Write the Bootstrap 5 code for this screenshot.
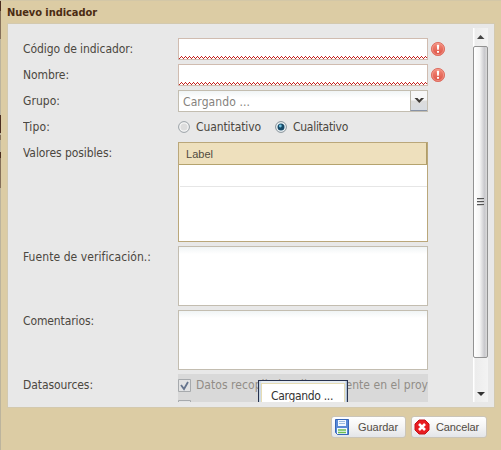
<!DOCTYPE html>
<html lang="es">
<head>
<meta charset="utf-8">
<title>Nuevo indicador</title>
<link href="https://cdn.jsdelivr.net/npm/bootstrap@5.3.0/dist/css/bootstrap.min.css" rel="stylesheet">
<style>
body{width:501px;height:450px;overflow:hidden;background:#dccca4;font:12px/16px "DejaVu Sans Condensed","DejaVu Sans",sans-serif;color:#4b4740;font-stretch:condensed}
.dialog{width:501px;height:450px;padding:0 7px;background:#dccca4;border-left:1px solid #bcb49d;padding-left:6px;border-top:1px solid #d3c7a7}
.edge{left:-1px;width:1px;background:#4b2d20}
.edge.soft{background:#85705a}
.dialog-title{height:22px;font-size:11px;line-height:23px;font-weight:bold;color:#4b2b12}
.pane{width:488px;height:385px;background:#e8e8e8;border:1px solid #d3c9ae;padding:4px 5px 5px 15px}
.form-view{width:434px;height:374px;padding-top:10px;overflow:hidden}
.field{margin-bottom:4px;min-height:22px}
.field-name{width:155px;flex:none;padding-top:3px}
.box{width:250px;height:22px;border:1px solid #c3bdb0;background:#fff linear-gradient(#f0f4f5,#fff 7px)}
.box.bad{border-color:#d0bcb0;background-color:#fff;background-image:linear-gradient(90deg,#c4201c 1px,transparent 1px),linear-gradient(90deg,#c4201c 1px,transparent 1px),linear-gradient(90deg,#c4201c 1px,transparent 1px);background-size:4px 1px,2px 1px,4px 1px;background-position:0 19px,1px 18px,2px 17px;background-repeat:repeat-x}
.tall{height:60px}
.alert-mark{margin:3px 0 0 2px}
.fit{display:inline-block;white-space:nowrap}
.combo-text{color:#85827d;padding:3px 0 0 4px}
.combo-btn{width:17px;height:20px;border-left:1px solid #b9b5a9;border-bottom:1px solid #8792a5;background:linear-gradient(#f7f7f7 45%,#dcdcdc 55%,#d8dce2)}
.values{width:250px;height:100px;border:1px solid #baa77a;background:#fff}
.values-head{height:22px;background:#eee0bd;border-bottom:1px solid #b5a36e;border-right:1px solid #b09d68;font:11px/22px "Liberation Sans",sans-serif;padding-left:7px;color:#514b3f}
.values-row{height:22px;border-bottom:1px solid #e6e6e6;margin-left:1px}
.sources{width:250px;height:40px;background:#d9d9d9;overflow:hidden;color:#918d87}
.loading{left:80px;top:6px;width:90px;height:40px;border:1px solid #28324e;background:linear-gradient(90deg,#b9cbdc,#e7edf3 3px,#e7edf3 86px,#9db2c9);padding:2px}
.loading-text{height:40px;border:1px solid #e6dcb4;background:#fff;color:#333;padding:4px 0 0 9px}
.scrollbar{width:15px;height:374px;margin-left:16px;background:linear-gradient(90deg,#fff 1px,#ececec 2px,#f3f3f3)}
.thumb{height:312px;border:1px solid #929292;border-radius:2px;background:linear-gradient(90deg,#fff,#f4f4f4 45%,#c9c9cd 80%,#dadada)}
.actions{padding:8px 7px 0 0;gap:5px}
.actions .btn{height:22px;padding:0 0 0 2px;border:1px solid #cbc5b8;border-radius:3px;background:linear-gradient(#fff,#f4f4f4 50%,#e3e5e8);font:11px/20px "Liberation Sans",sans-serif;color:#514b43;display:flex;align-items:center}
svg{display:block;flex:none}
</style>
<script src="https://cdn.jsdelivr.net/npm/bootstrap@5.3.0/dist/js/bootstrap.bundle.min.js"></script>
</head>
<body>
<svg width="0" height="0" class="position-absolute"><defs>
<linearGradient id="red" x2="0" y2="1"><stop stop-color="#f48b79"/><stop offset="1" stop-color="#dc5145"/></linearGradient>
<symbol id="alert" viewBox="0 0 16 16"><circle cx="8" cy="8" r="6.6" fill="url(#red)" stroke="#de7265"/><circle cx="8" cy="8" r="5.6" fill="none" stroke="#f4a094" stroke-width=".7"/><path d="M6.8 3.8h2.4l-.4 5H7.2zM7 10h2v1.8H7z" fill="#fff"/></symbol>
</defs></svg>
<main class="dialog position-relative">
  <i class="edge position-absolute" style="top:0;height:10px"></i><i class="edge soft position-absolute" style="top:10px;height:28px"></i><i class="edge position-absolute" style="top:114px;height:18px"></i><i class="edge soft position-absolute" style="top:134px;height:5px"></i><i class="edge position-absolute" style="top:151px;height:6px"></i><i class="edge soft position-absolute" style="top:157px;height:30px"></i>
  <div class="dialog-title"><span class="fit" data-w="90">Nuevo indicador</span></div>
  <section class="pane d-flex">
    <div class="form-view">
      <div class="field d-flex"><div class="field-name"><span class="fit" data-w="110">Código de indicador:</span></div><div class="box bad"></div><svg class="alert-mark" width="16" height="16"><use href="#alert"/></svg></div>
      <div class="field d-flex"><div class="field-name"><span class="fit" data-w="46">Nombre:</span></div><div class="box bad"></div><svg class="alert-mark" width="16" height="16"><use href="#alert"/></svg></div>
      <div class="field d-flex"><div class="field-name"><span class="fit" data-w="37">Grupo:</span></div><div class="box d-flex justify-content-between"><div class="combo-text"><span class="fit" data-w="67">Cargando ...</span></div><div class="combo-btn"><svg width="16" height="19"><path d="M3.5 7h3l1.8 2 1.8-2h3L8.3 12z" fill="#403c38"/></svg></div></div></div>
      <div class="field d-flex"><div class="field-name"><span class="fit" data-w="27">Tipo:</span></div><div class="d-flex align-items-center">
        <svg width="12" height="12"><circle cx="6" cy="6" r="5.4" fill="#f4f4f4" stroke="#99a0a5"/><circle cx="6" cy="6" r="3.5" fill="#ddd"/></svg><span class="fit" data-w="65" style="margin-left:6px">Cuantitativo</span>
        <svg width="12" height="12" style="margin-left:14px"><circle cx="6" cy="6" r="5.4" fill="#eef4f7" stroke="#849097"/><circle cx="6" cy="6" r="3.5" fill="#174a68"/><circle cx="5.3" cy="5" r="1.4" fill="#73c5e2"/></svg><span class="fit" data-w="55" style="margin-left:6px">Cualitativo</span></div></div>
      <div class="field d-flex"><div class="field-name"><span class="fit" data-w="89">Valores posibles:</span></div><div class="values"><div class="values-head"><span class="fit" data-w="27">Label</span></div><div class="values-row"></div></div></div>
      <div class="field d-flex"><div class="field-name"><span class="fit" data-w="128">Fuente de verificación.:</span></div><div class="box tall"></div></div>
      <div class="field d-flex"><div class="field-name"><span class="fit" data-w="71">Comentarios:</span></div><div class="box tall"></div></div>
      <div class="field d-flex"><div class="field-name"><span class="fit" data-w="70">Datasources:</span></div><div class="sources position-relative">
        <div class="d-flex align-items-center" style="height:22px"><svg width="13" height="13"><path d="M.5.5h12v12H.5z" fill="#e2e3e4" stroke="#a7aaad"/><path d="M3 6l3 4 4-7" fill="none" stroke="#66758e" stroke-width="1.8"/></svg><span class="fit" data-w="232" style="margin-left:5px">Datos recopilados directamente en el proy</span></div>
        <svg class="mt-1" width="13" height="13"><path d="M.5.5h12v12H.5z" fill="#e2e3e4" stroke="#a7aaad"/></svg>
        <div class="loading position-absolute"><div class="loading-text"><span class="fit" data-w="62">Cargando ...</span></div></div>
      </div></div>
    </div>
    <div class="scrollbar"><svg width="15" height="18"><path d="M4 11l3.5-4 4 4z" fill="#444"/></svg><div class="thumb d-flex align-items-center justify-content-center"><svg width="7" height="9" shape-rendering="crispEdges"><path d="M0 0h7v1H0zM0 3h7v1H0zM0 6h7v1H0z" fill="#555"/><path d="M0 1h7v1H0zM0 4h7v1H0zM0 7h7v1H0z" fill="#ccc"/></svg></div><svg width="15" height="44"><path d="M4 34h8l-4 4z" fill="#333"/></svg></div>
  </section>
  <div class="actions d-flex justify-content-end">
    <button class="btn" style="width:75px"><svg width="16" height="16"><path d="M1.5.5h13v15h-11l-2-2z" fill="#598ad6" stroke="#3766b8"/><path d="M4 1h8v6H4zM3 9h10v6H3z" fill="#f2f8ff"/><path d="M5 2.5h6M5 4.5h6" stroke="#9bbce1"/><path d="M4 11h8M4 13.5h8" stroke="#6dbd51" stroke-width="1.4"/></svg><span class="fit" data-w="40" style="margin-left:8px">Guardar</span></button>
    <button class="btn" style="width:76px"><svg width="16" height="16"><path d="M5 1h6l4 4v6l-4 4H5l-4-4V5z" fill="#e81c20" stroke="#c61318"/><path d="M5 5l6 6M11 5l-6 6" stroke="#fff" stroke-width="2.6"/></svg><span class="fit" data-w="43" style="margin-left:6px">Cancelar</span></button>
  </div>
</main>
<script>
document.querySelectorAll('.fit').forEach(e=>{
  e.style.letterSpacing='0';
  const gap=(+e.dataset.w-e.getBoundingClientRect().width)/e.textContent.length;
  e.style.letterSpacing=gap+'px';
});
</script>
</body>
</html>
